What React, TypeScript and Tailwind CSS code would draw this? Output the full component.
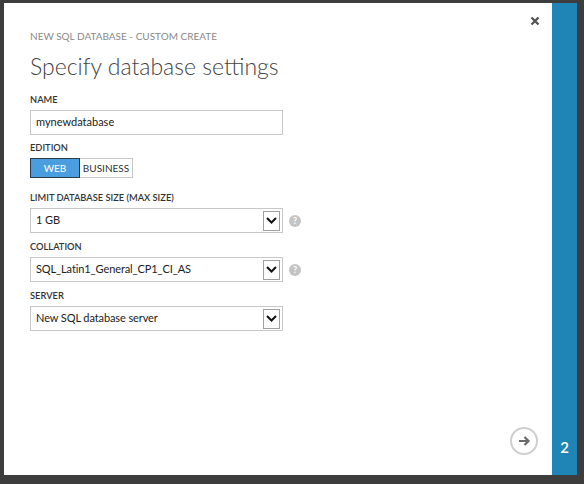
import React from 'react';

function HelpIcon() {
  return (
    <span className="ml-[6px] flex h-[12px] w-[12px] items-center justify-center rounded-full bg-[#c4c4c4] text-[9px] font-bold leading-none text-white">
      ?
    </span>
  );
}

function Select({ value, help }: { value: string; help?: boolean }) {
  return (
    <div className="flex items-center">
      <div className="flex h-[25px] w-[253px] items-center border border-[#c8c8c8] bg-white pl-[5px] pr-[2px]">
        <span className="flex-1 text-[11px] tracking-[-0.1px] text-[#222]">{value}</span>
        <span className="flex h-[20px] w-[17px] items-center justify-center border border-[#a0a0a0] bg-white">
          <svg width="11" height="7" viewBox="0 0 11 7">
            <path d="M1 1l4.5 4.5L10 1" fill="none" stroke="#111" strokeWidth="2" />
          </svg>
        </span>
      </div>
      {help && <HelpIcon />}
    </div>
  );
}

function Label({ children }: { children: React.ReactNode }) {
  return (
    <div className="mb-[4px] text-[9.3px] font-semibold uppercase leading-[12px] text-[#333]">{children}</div>
  );
}

export default function App() {
  return (
    <div
      className="flex h-[484px] w-[584px] bg-[#3d3d3d] pb-[9px] pl-[4px] pr-[7px] pt-[3px]"
      style={{ fontFamily: 'Lato, "Open Sans", sans-serif' }}
    >
      <div className="relative flex-1 bg-white">
        <button className="absolute right-[12px] top-[13px]">
          <svg width="10" height="10" viewBox="0 0 10 10">
            <path d="M1.5 1.5l7 7M8.5 1.5l-7 7" stroke="#555" strokeWidth="2.4" />
          </svg>
        </button>

        <div className="pl-[26px] pt-[26px]">
          <div className="text-[10px] uppercase leading-[14px] text-[#8a8a8a]">
            New SQL Database - Custom Create
          </div>
          <h1 className="mt-[7px] text-[23px] font-light leading-[32px] text-[#444]">
            Specify database settings
          </h1>

          <div className="mt-[12px]">
            <Label>Name</Label>
            <div className="flex h-[25px] w-[253px] items-center border border-[#c8c8c8] pl-[5px] text-[11px] text-[#222]">
              mynewdatabase
            </div>
          </div>

          <div className="mt-[7px]">
            <Label>Edition</Label>
            <div className="flex h-[20px] text-[10px]">
              <span className="flex w-[50px] items-center justify-center border border-[#2b3a48] bg-[#4a9ee0] text-white">
                WEB
              </span>
              <span className="flex w-[53px] items-center justify-center border border-l-0 border-[#c8c8c8] text-[#333]">
                BUSINESS
              </span>
            </div>
          </div>

          <div className="mt-[14px]">
            <Label>Limit database size (max size)</Label>
            <Select value="1 GB" help />
          </div>

          <div className="mt-[8px]">
            <Label>Collation</Label>
            <Select value="SQL_Latin1_General_CP1_CI_AS" help />
          </div>

          <div className="mt-[8px]">
            <Label>Server</Label>
            <Select value="New SQL database server" />
          </div>
        </div>

        <button className="absolute bottom-[20px] right-[14px] flex h-[28px] w-[28px] items-center justify-center rounded-full border-2 border-[#cfcfcf]">
          <svg width="13" height="12" viewBox="0 0 13 12">
            <path d="M1 6h9M6.5 2l4 4-4 4" fill="none" stroke="#6a6a6a" strokeWidth="2.2" />
          </svg>
        </button>
      </div>
      <div className="flex w-[25px] flex-col justify-end bg-[#1f84b6] pb-[17px]">
        <span className="text-center text-[15px] font-semibold text-white">2</span>
      </div>
    </div>
  );
}
